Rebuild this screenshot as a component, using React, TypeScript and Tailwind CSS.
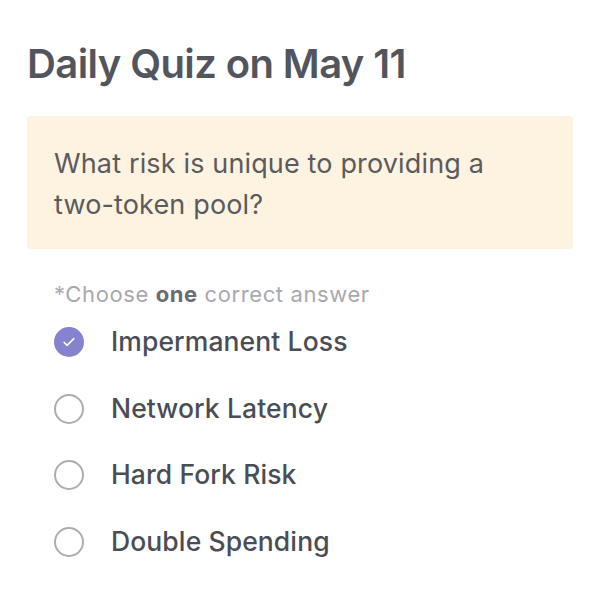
import React from 'react';

const options = ['Impermanent Loss', 'Network Latency', 'Hard Fork Risk', 'Double Spending'];

const App: React.FC = () => {
  const selected = 0;

  return (
    <div className="min-h-screen bg-white px-[27px] pt-[36px]" style={{ fontFamily: 'Inter, "Noto Sans", sans-serif' }}>
      <h1 className="text-[40px] leading-[56px] font-semibold text-[#53555e] tracking-[-0.6px]">Daily Quiz on May 11</h1>

      <div className="mt-[24px] rounded bg-[#fef2e1] px-[27px] pt-[27px] pb-[24px]">
        <p className="max-w-[450px] text-[27px] leading-[41px] text-[#5b5b5e] font-normal tracking-[0.15px]">
          What risk is unique to providing a two-token pool?
        </p>
      </div>

      <div className="mt-[32px] px-[27px]">
        <p className="text-[22px] leading-[26px] text-[#a9a9ad] tracking-[0.6px]">
          *Choose <span className="font-bold text-[#6b6b70]">one</span> correct answer
        </p>

        <ul className="mt-[2px] flex flex-col">
          {options.map((opt, i) => (
            <li key={opt} className="flex items-center h-[66.5px] gap-[27px]">
              {i === selected ? (
                <span className="w-[30px] h-[30px] rounded-full bg-[#8583cf] flex items-center justify-center">
                  <svg width="18" height="18" viewBox="0 0 24 24" fill="none" stroke="white" strokeWidth="2" strokeLinecap="round" strokeLinejoin="round">
                    <path d="M5.5 12.5l4 4L18.5 7.5" />
                  </svg>
                </span>
              ) : (
                <span className="w-[30px] h-[30px] rounded-full border-2 border-[#adadad]" />
              )}
              <span className="text-[26.5px] font-medium text-[#4b4d55] tracking-[0.1px]">{opt}</span>
            </li>
          ))}
        </ul>
      </div>
    </div>
  );
};

export default App;
